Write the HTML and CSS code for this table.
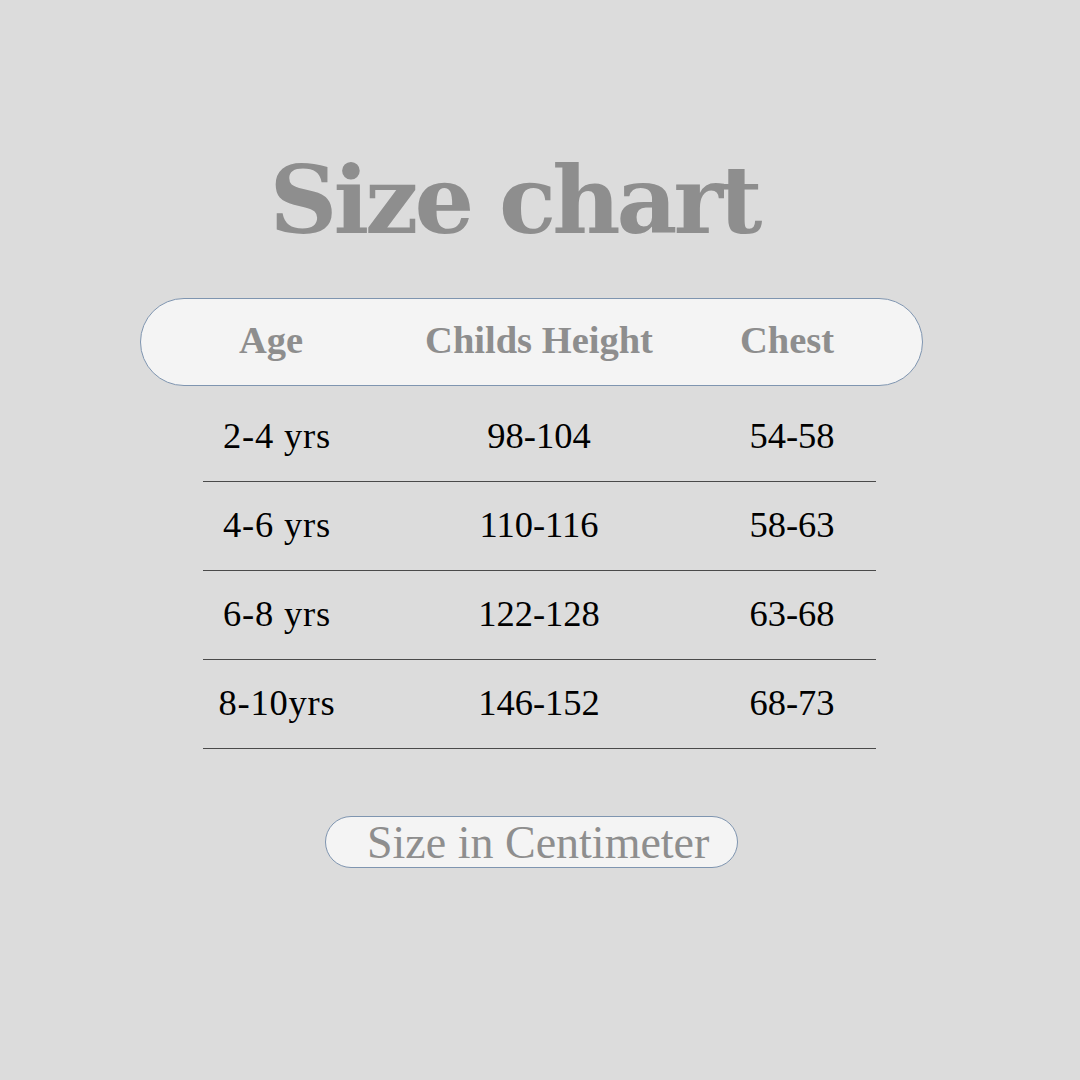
FILE: index.html
```html
<!DOCTYPE html>
<html lang="en">
<head>
<meta charset="utf-8">
<title>Size chart</title>
<link rel="stylesheet" href="styles.css">
</head>
<body>
<main class="page">
  <h1 class="title">Size chart</h1>
  <div class="head-pill">
    <span class="hcell">Age</span>
    <span class="hcell">Childs Height</span>
    <span class="hcell">Chest</span>
  </div>
  <div class="rows">
    <div class="row"><span class="c1">2-4 yrs</span><span class="c2">98-104</span><span class="c3">54-58</span></div>
    <div class="row"><span class="c1">4-6 yrs</span><span class="c2">110-116</span><span class="c3">58-63</span></div>
    <div class="row"><span class="c1">6-8 yrs</span><span class="c2">122-128</span><span class="c3">63-68</span></div>
    <div class="row"><span class="c1">8-10yrs</span><span class="c2">146-152</span><span class="c3">68-73</span></div>
  </div>
  <div class="foot-pill">Size in Centimeter</div>
</main>
</body>
</html>
```

FILE: styles.css
```css
html, body {
  margin: 0;
  padding: 0;
  background: #dcdcdc;
}
.page {
  width: 1080px;
  height: 1080px;
  display: flex;
  flex-direction: column;
  align-items: flex-start;
}
.title {
  margin: 140px 0 0 0;
  align-self: center;
  transform: translateX(-26px);
  font-family: "DejaVu Serif", serif;
  font-weight: bold;
  font-size: 94px;
  line-height: 120px;
  color: #8e8e8e;
  letter-spacing: -4px;
}
.head-pill {
  margin: 38px 0 0 140px;
  width: 783px;
  height: 88px;
  box-sizing: border-box;
  border: 1.5px solid #7f95b0;
  border-radius: 44px;
  background: #f4f4f4;
  display: grid;
  grid-template-columns: 260px 276px 220px;
  align-items: center;
}
.hcell {
  justify-self: center;
  font-family: "Liberation Serif", serif;
  font-weight: bold;
  font-size: 38.5px;
  color: #8e8e8e;
  padding-bottom: 4px;
}
.rows {
  margin: 7px 0 0 203px;
  width: 673px;
}
.row {
  height: 88px;
  border-bottom: 1.5px solid #4a4a4a;
  display: grid;
  grid-template-columns: 148px 376px 130px 1fr;
  align-items: center;
  font-family: "Liberation Serif", serif;
  font-size: 36.5px;
  color: #000;
}
.row span {
  justify-self: center;
  padding-bottom: 4px;
}
.row .c1 {
  letter-spacing: 0.8px;
}
.foot-pill {
  margin: 67px 0 0 325px;
  width: 413px;
  height: 52px;
  box-sizing: border-box;
  border: 1.5px solid #7f95b0;
  border-radius: 26px;
  background: #f4f4f4;
  display: flex;
  align-items: center;
  padding-left: 41px;
  padding-top: 2px;
  font-family: "Liberation Serif", serif;
  font-size: 46px;
  color: #8e8e8e;
  line-height: 1;
  white-space: nowrap;
}
```
